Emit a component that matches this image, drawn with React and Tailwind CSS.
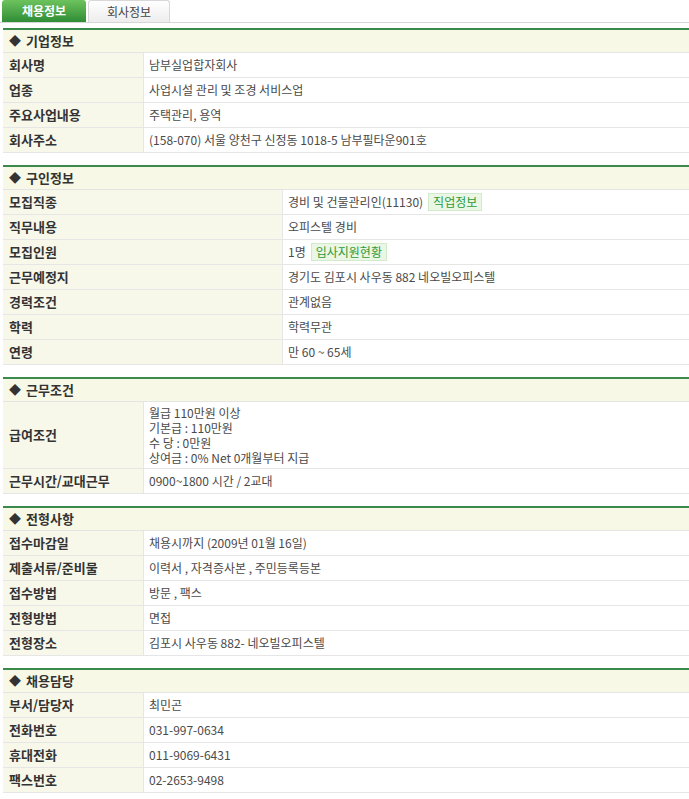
const font = { fontFamily: '"Noto Sans CJK KR", "Noto Sans", sans-serif' };

function Badge({ children }) {
  return (
    <span className="ml-[5px] inline-block border border-[#d3e9cb] bg-[#e9f7e4] px-[4px] leading-[16px] text-[#2f9a3a]">
      {children}
    </span>
  );
}

const sections = [
  {
    title: "기업정보",
    labelW: "w-[141px]",
    rows: [
      ["회사명", "남부실업합자회사"],
      ["업종", "사업시설 관리 및 조경 서비스업"],
      ["주요사업내용", "주택관리, 용역"],
      ["회사주소", "(158-070) 서울 양천구 신정동 1018-5 남부필타운901호"],
    ],
  },
  {
    title: "구인정보",
    labelW: "w-[280px]",
    rows: [
      ["모집직종", <>경비 및 건물관리인(11130)<Badge>직업정보</Badge></>],
      ["직무내용", "오피스텔 경비"],
      ["모집인원", <>1명<Badge>입사지원현황</Badge></>],
      ["근무예정지", "경기도 김포시 사우동 882 네오빌오피스텔"],
      ["경력조건", "관계없음"],
      ["학력", "학력무관"],
      ["연령", "만 60 ~ 65세"],
    ],
  },
  {
    title: "근무조건",
    labelW: "w-[141px]",
    rows: [
      [
        "급여조건",
        <div className="py-[3px] leading-[15px]">
          <div>월급 110만원 이상</div>
          <div>기본급 : 110만원</div>
          <div>수 당 : 0만원</div>
          <div>상여금 : 0% Net 0개월부터 지급</div>
        </div>,
      ],
      ["근무시간/교대근무", "0900~1800 시간 / 2교대"],
    ],
  },
  {
    title: "전형사항",
    labelW: "w-[141px]",
    rows: [
      ["접수마감일", "채용시까지 (2009년 01월 16일)"],
      ["제출서류/준비물", "이력서 , 자격증사본 , 주민등록등본"],
      ["접수방법", "방문 , 팩스"],
      ["전형방법", "면접"],
      ["전형장소", "김포시 사우동 882- 네오빌오피스텔"],
    ],
  },
  {
    title: "채용담당",
    labelW: "w-[141px]",
    rows: [
      ["부서/담당자", "최민곤"],
      ["전화번호", "031-997-0634"],
      ["휴대전화", "011-9069-6431"],
      ["팩스번호", "02-2653-9498"],
    ],
  },
];

export default function App() {
  return (
    <div className="w-[689px] bg-white text-[12px] text-[#4a4a4a]" style={font}>
      {/* tabs */}
      <div className="flex h-[23px] items-end gap-[2px] border-b border-[#d6d6d6] pl-[2px]">
        <div className="flex h-[22px] w-[84px] items-center justify-center rounded-t-[3px] bg-gradient-to-b from-[#6cc35d] to-[#2f8d36] font-bold text-white">
          채용정보
        </div>
        <div className="flex h-[22px] w-[82px] items-center justify-center rounded-t-[3px] border border-b-0 border-[#d8d8d8] bg-gradient-to-b from-white to-[#ededed] text-[#444]">
          회사정보
        </div>
      </div>

      <div className="ml-[3px] mt-[5px] flex flex-col gap-[12px]">
        {sections.map((s) => (
          <div key={s.title} className="border-t-2 border-[#3a8a4b]">
            <div className="flex h-[23px] items-center border-b border-[#e4e4e4] bg-[#f7f8e6] pl-[6px] text-[13px] font-bold text-[#333]">
              <span className="mr-[5px] text-[12px]">◆</span>
              {s.title}
            </div>
            {s.rows.map(([label, value]) => (
              <div key={label} className="flex min-h-[25px] border-b border-[#e6e6e6]">
                <div className={`${s.labelW} flex shrink-0 items-center border-r border-[#e6e6e6] bg-[#f8f8ea] pl-[6px] text-[13px] font-bold text-[#333]`}>
                  {label}
                </div>
                <div className="flex flex-1 items-center pl-[5px]">{value}</div>
              </div>
            ))}
          </div>
        ))}
      </div>
    </div>
  );
}
